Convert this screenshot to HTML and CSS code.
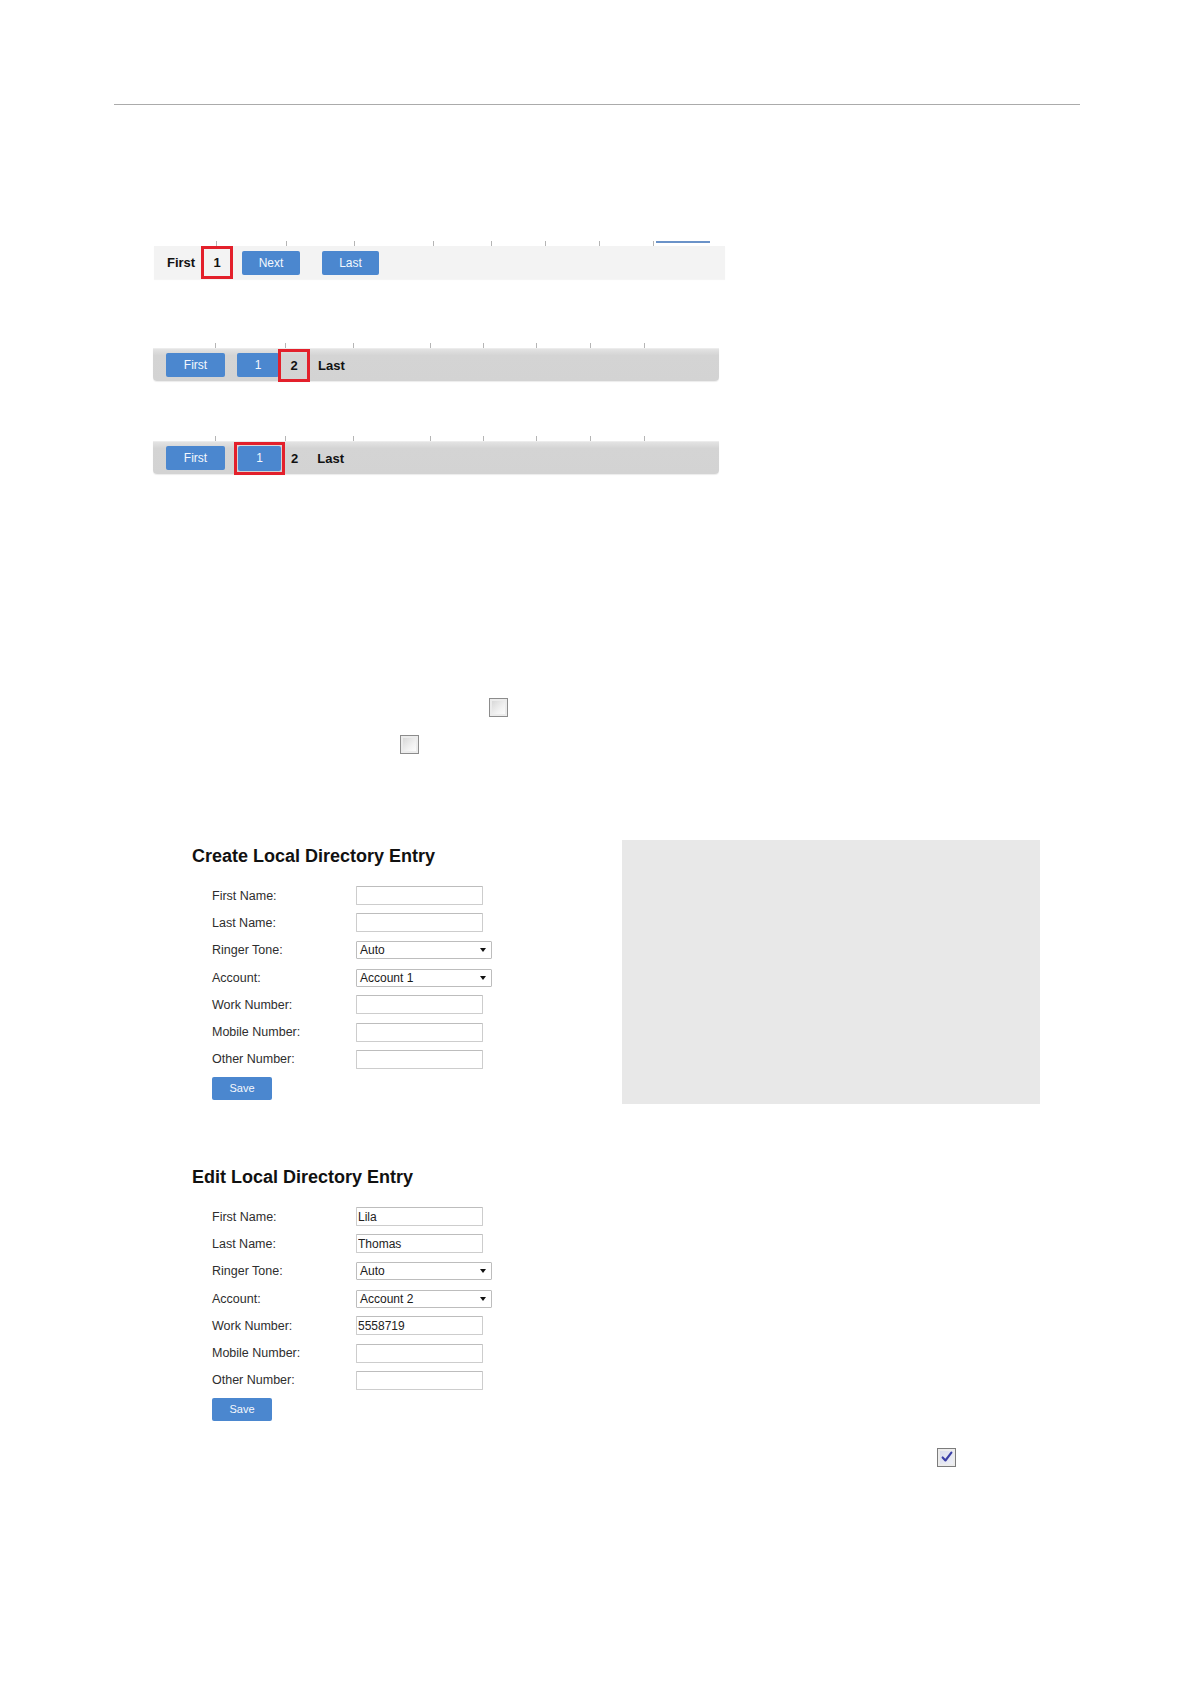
FILE: index.html
```html
<!DOCTYPE html>
<html lang="en">
<head>
<meta charset="utf-8">
<title>Local Directory</title>
<link rel="stylesheet" href="styles.css">
</head>
<body>
<div class="page">
  <hr class="rule">

  <div class="pager pager-one">
    <div class="ticks">
      <span class="tick w70"></span><span class="tick w68"></span><span class="tick w79"></span><span class="tick w58"></span><span class="tick w54"></span><span class="tick w54"></span><span class="tick w54"></span><span class="tick w5"></span><span class="tab"></span>
    </div>
    <div class="bar bar-light">
      <span class="plain first-label">First</span>
      <span class="hl hl-num"><span class="plain">1</span></span>
      <span class="btn btn-next">Next</span>
      <span class="btn btn-last">Last</span>
    </div>
  </div>

  <div class="pager pager-two">
    <div class="ticks">
      <span class="tick w70"></span><span class="tick w68"></span><span class="tick w77"></span><span class="tick w53"></span><span class="tick w53"></span><span class="tick w54"></span><span class="tick w54"></span><span class="tick"></span>
    </div>
    <div class="bar bar-dark">
      <span class="btn btn-first">First</span>
      <span class="btn btn-one">1</span>
      <span class="hl hl-two"><span class="plain">2</span></span>
      <span class="plain last-label">Last</span>
    </div>
  </div>

  <div class="pager pager-three">
    <div class="ticks">
      <span class="tick w70"></span><span class="tick w68"></span><span class="tick w77"></span><span class="tick w53"></span><span class="tick w53"></span><span class="tick w54"></span><span class="tick w54"></span><span class="tick"></span>
    </div>
    <div class="bar bar-dark">
      <span class="btn btn-first">First</span>
      <span class="hl hl-btn"><span class="btn btn-one">1</span></span>
      <span class="plain two-label">2</span>
      <span class="plain last-label3">Last</span>
    </div>
  </div>

  <div class="check check-a"></div>
  <div class="check check-b"></div>

  <section class="entry create">
    <div class="form">
      <h2 class="title">Create Local Directory Entry</h2>
      <div class="rows">
        <div class="row"><span class="label">First Name:</span><input class="field" type="text" value=""></div>
        <div class="row"><span class="label">Last Name:</span><input class="field" type="text" value=""></div>
        <div class="row"><span class="label">Ringer Tone:</span><div class="select">Auto</div></div>
        <div class="row"><span class="label">Account:</span><div class="select">Account 1</div></div>
        <div class="row"><span class="label">Work Number:</span><input class="field" type="text" value=""></div>
        <div class="row"><span class="label">Mobile Number:</span><input class="field" type="text" value=""></div>
        <div class="row"><span class="label">Other Number:</span><input class="field" type="text" value=""></div>
      </div>
      <span class="btn btn-save">Save</span>
    </div>
    <div class="panel"></div>
  </section>

  <section class="entry edit">
    <div class="form">
      <h2 class="title">Edit Local Directory Entry</h2>
      <div class="rows">
        <div class="row"><span class="label">First Name:</span><input class="field" type="text" value="Lila"></div>
        <div class="row"><span class="label">Last Name:</span><input class="field" type="text" value="Thomas"></div>
        <div class="row"><span class="label">Ringer Tone:</span><div class="select">Auto</div></div>
        <div class="row"><span class="label">Account:</span><div class="select">Account 2</div></div>
        <div class="row"><span class="label">Work Number:</span><input class="field" type="text" value="5558719"></div>
        <div class="row"><span class="label">Mobile Number:</span><input class="field" type="text" value=""></div>
        <div class="row"><span class="label">Other Number:</span><input class="field" type="text" value=""></div>
      </div>
      <span class="btn btn-save">Save</span>
    </div>
  </section>

  <div class="check check-c checked">
    <svg viewBox="0 0 16 16" width="14" height="14" aria-hidden="true"><path d="M3 8.5 L6.2 12 L13 3" fill="none" stroke="#3a3fa6" stroke-width="2.4" stroke-linecap="round" stroke-linejoin="round"/></svg>
  </div>
</div>
</body>
</html>
```

FILE: styles.css
```css
* { box-sizing: border-box; }
html, body { margin: 0; padding: 0; background: #ffffff; }
body { font-family: "Liberation Sans", Arial, sans-serif; color: #222; }
.page { width: 1191px; min-height: 1684px; padding-top: 104px; }

.rule { margin: 0 0 0 114px; width: 966px; height: 0; border: 0; border-top: 1px solid #ababab; }

/* pagers */
.pager { display: flex; flex-direction: column; }
.pager-one { margin: 136px 0 0 154px; width: 571px; }
.pager-two { margin: 64px 0 0 153px; width: 566px; }
.pager-three { margin: 55px 0 0 153px; width: 566px; }

.ticks { display: flex; height: 5px; padding-left: 62px; }
.tick { height: 5px; border-left: 1px solid #b5b5b5; flex: none; }
.w70 { width: 70px; } .w68 { width: 68px; } .w77 { width: 77px; } .w79 { width: 79px; }
.w58 { width: 58px; } .w53 { width: 53px; } .w54 { width: 54px; } .w5 { width: 3px; }
.tab { width: 54px; height: 5px; border-top: 2px solid #6a92c8; flex: none; }

.bar { display: flex; align-items: center; height: 33px; padding-left: 13px; }
.bar-light { background: #f3f3f3; box-shadow: 0 1px 1px rgba(0,0,0,0.04); }
.bar-dark { height: 33px; background: linear-gradient(#e3e3e3, #d4d4d4 20%, #d3d3d3); border-radius: 0 0 4px 4px; border-top: 1px solid #ececec; box-shadow: 0 1px 1px rgba(0,0,0,0.08); }

.plain { font-size: 13px; font-weight: bold; color: #111; }
.first-label { width: 34px; }

.btn { display: inline-flex; align-items: center; justify-content: center; background: #4b87cf; color: #f4f8fd; font-size: 12px; border-radius: 2px; height: 24px; flex: none; }
.btn-next { width: 58px; margin-left: 9px; }
.btn-last { width: 57px; margin-left: 22px; }
.btn-first { width: 59px; height: 24px; }
.btn-one { width: 42px; height: 24px; }
.bar-dark .btn-one { margin-left: 12px; }

.hl { display: inline-flex; align-items: center; justify-content: center; border: 3px solid #e3202b; flex: none; }
.hl-num { width: 32px; height: 33px; }
.hl-two { width: 32px; height: 33px; margin-left: -1px; }
.hl-btn { width: 51px; height: 33px; margin-left: 9px; }
.hl-btn .btn-one { margin-left: 0; height: 25px; width: 43px; }
.last-label { margin-left: 8px; }
.two-label { margin-left: 6px; }
.last-label3 { margin-left: 19px; }

/* checkboxes */
.check { width: 19px; height: 19px; border: 1px solid #8c8c8c; background: linear-gradient(135deg, #d2d2d2, #f2f2f2 60%, #ffffff); box-shadow: inset 0 0 0 2px #ececec; }
.check-a { margin: 224px 0 0 489px; }
.check-b { margin: 18px 0 0 400px; }
.check-c { margin: 27px 0 0 937px; display: flex; align-items: center; justify-content: center; background: linear-gradient(135deg, #d4d8ea, #f2f3f9); border-color: #7c7c7c; }

/* entries */
.entry { display: flex; align-items: flex-start; }
.create { margin-top: 86px; }
.edit { margin-top: 57px; }
.form { margin-left: 192px; padding-top: 5px; width: 430px; display: flex; flex-direction: column; align-items: flex-start; }
.title { margin: 0; font-size: 18px; line-height: 22px; font-weight: bold; color: #111; }
.rows { margin: 15px 0 0 20px; display: flex; flex-direction: column; }
.row { height: 27.3px; display: flex; align-items: center; }
.label { width: 144px; font-size: 12.5px; color: #2e2e2e; flex: none; }
.field { width: 127px; height: 19px; margin: 0; padding: 0 1px; border: 1px solid #cdcdcd; border-top-color: #bdbdbd; border-radius: 1px; font-family: "Liberation Sans", Arial, sans-serif; font-size: 12px; color: #222; background: #fff; outline: none; }
.select { position: relative; width: 136px; height: 18px; padding: 0 3px; border: 1px solid #bdbdbd; border-radius: 1px; font-size: 12px; line-height: 16px; color: #1a1a1a; background: #fff; }
.select::after { content: ""; position: absolute; right: 5px; top: 6px; border-left: 3.5px solid transparent; border-right: 3.5px solid transparent; border-top: 4px solid #111; }
.btn-save { width: 60px; height: 23px; margin: 3.9px 0 0 20px; font-size: 11px; }

.panel { width: 418px; height: 264px; background: #e8e8e8; flex: none; }
```
